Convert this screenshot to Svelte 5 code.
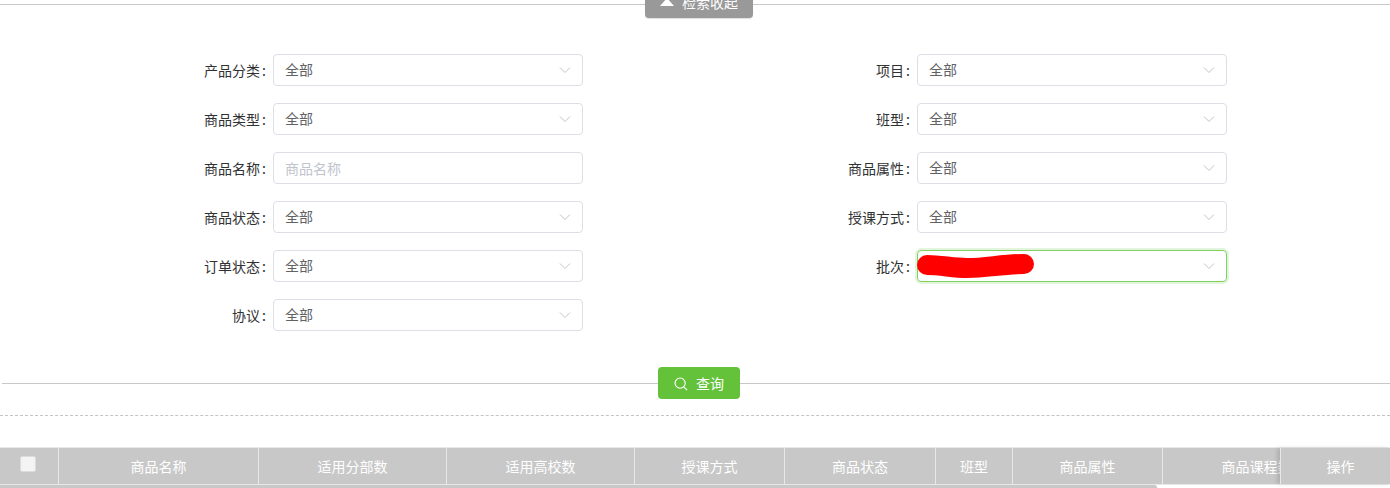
<script lang="ts">
  type Field = { label: string; value?: string; placeholder?: string; focused?: boolean };

  const rows: Field[][] = [
    [{ label: "产品分类", value: "全部" }, { label: "项目", value: "全部" }],
    [{ label: "商品类型", value: "全部" }, { label: "班型", value: "全部" }],
    [{ label: "商品名称", placeholder: "商品名称" }, { label: "商品属性", value: "全部" }],
    [{ label: "商品状态", value: "全部" }, { label: "授课方式", value: "全部" }],
    [{ label: "订单状态", value: "全部" }, { label: "批次", focused: true }],
    [{ label: "协议", value: "全部" }],
  ];

  const columns = [
    { title: "商品名称", width: 200 },
    { title: "适用分部数", width: 188 },
    { title: "适用高校数", width: 188 },
    { title: "授课方式", width: 150 },
    { title: "商品状态", width: 151 },
    { title: "班型", width: 77 },
    { title: "商品属性", width: 150 },
    { title: "商品课程数", width: 188 },
  ];
</script>

<div class="page">
  <div class="toggle-bar">
    <span class="line"></span>
    <button type="button" class="toggle">
      <span class="toggle__arrow"></span>
      检索收起
    </button>
    <span class="line"></span>
  </div>

  <form class="form">
    {#each rows as row}
      <div class="form__row">
        {#each row as field}
          <div class="field">
            <span class="field__label">{field.label}<span class="field__colon">:</span></span>
            <div class="control" class:control--focused={field.focused}>
              {#if field.placeholder}
                <span class="control__placeholder">{field.placeholder}</span>
              {:else}
                <span class="control__value">{field.value ?? ""}</span>
                <svg class="control__caret" viewBox="0 0 12 8" width="12" height="8">
                  <path d="M1 1.5 L6 6.5 L11 1.5" fill="none" stroke="#c0c4cc" stroke-width="1" />
                </svg>
              {/if}
              {#if field.focused}
                <svg class="scribble" viewBox="0 0 117 24" width="117" height="24">
                  <path
                    d="M10 11 C25 11 35 14 50 14 C70 14 85 10 107 10"
                    fill="none"
                    stroke="#ff0000"
                    stroke-width="20"
                    stroke-linecap="round"
                  />
                </svg>
              {/if}
            </div>
          </div>
        {/each}
      </div>
    {/each}
  </form>

  <div class="query-bar">
    <span class="line"></span>
    <button type="button" class="query">
      <svg class="query__icon" viewBox="0 0 16 16" width="14" height="14">
        <circle cx="7" cy="7" r="5.8" fill="none" stroke="#fff" stroke-width="1.3" />
        <path d="M11.2 11.2 L15 15" stroke="#fff" stroke-width="1.3" />
      </svg>
      查询
    </button>
    <span class="line"></span>
  </div>

  <div class="dashed"></div>

  <div class="table">
    <div class="table__head">
      <div class="table__cell table__cell--check"><span class="checkbox"></span></div>
      {#each columns as column}
        <div class="table__cell" style:width={`${column.width}px`}>{column.title}</div>
      {/each}
    </div>
    <div class="table__fixed">操作</div>
    <div class="table__scrollbar"></div>
  </div>
</div>

<style>
  :global(body) {
    margin: 0;
    background: #fff;
  }

  .page {
    width: 1390px;
    height: 488px;
    overflow: hidden;
    font-family: "Noto Sans CJK SC", "Liberation Sans", sans-serif;
    font-size: 14px;
  }

  .line {
    flex: 1;
    height: 1px;
    background: #c8c8c8;
  }

  .toggle-bar {
    display: flex;
    align-items: flex-start;
    height: 54px;
  }

  .toggle-bar .line {
    margin-top: 4px;
  }

  .toggle-bar .line:first-child {
    flex: 0 0 645px;
  }

  .toggle {
    width: 108px;
    height: 32px;
    margin-top: -14px;
    border: none;
    border-radius: 4px;
    background: #999;
    box-shadow: 0 1px 1px rgba(0, 0, 0, 0.12);
    color: #fff;
    font: inherit;
    padding: 0;
    display: flex;
    align-items: center;
    justify-content: center;
    gap: 8px;
  }

  .toggle__arrow {
    width: 0;
    height: 0;
    border-left: 7px solid transparent;
    border-right: 7px solid transparent;
    border-bottom: 8px solid #fff;
  }

  .form {
    display: flex;
    flex-direction: column;
    gap: 17px;
  }

  .form__row {
    display: grid;
    grid-template-columns: 644px 644px;
  }

  .field {
    display: flex;
    align-items: center;
    justify-content: flex-end;
    gap: 7px;
    padding-right: 61px;
  }

  .field__label {
    color: #303133;
    line-height: 32px;
  }

  .field__colon {
    margin-left: 2px;
  }

  .control {
    position: relative;
    box-sizing: border-box;
    width: 310px;
    height: 32px;
    border: 1px solid #dcdfe6;
    border-radius: 4px;
    padding: 0 11px;
    display: flex;
    align-items: center;
    justify-content: space-between;
    line-height: 28px;
  }

  .control--focused {
    border-color: #7ed060;
    box-shadow: 0 0 0 2px #e3f5dc;
  }

  .control__value {
    color: #606266;
    margin-top: -2px;
  }

  .control__placeholder {
    color: #c0c4cc;
  }

  .control__caret {
    margin-top: -1px;
  }

  .scribble {
    position: absolute;
    left: -1px;
    top: 3px;
  }

  .query-bar {
    display: flex;
    align-items: center;
    margin-top: 36px;
    padding-left: 2px;
  }

  .query {
    width: 82px;
    height: 32px;
    border: none;
    border-radius: 4px;
    background: #63c23a;
    color: #fff;
    font: inherit;
    padding: 0;
    display: flex;
    align-items: center;
    justify-content: center;
    gap: 8px;
  }

  .query__icon {
    margin-top: 1px;
  }

  .query-bar .line:first-child {
    flex: 0 0 656px;
  }

  .dashed {
    margin-top: 16px;
    border-top: 1px dashed #c4c4c4;
  }

  .table {
    position: relative;
    margin-top: 31px;
    color: #fff;
  }

  .table__head {
    display: flex;
    height: 36px;
    background: #c8c8c8;
    border-top: 1px solid #e8e8e8;
    border-bottom: 1px solid #e8e8e8;
    overflow: hidden;
  }

  .table__cell {
    flex: none;
    box-sizing: border-box;
    display: flex;
    align-items: center;
    justify-content: center;
    border-right: 1px solid #e8e8e8;
    white-space: nowrap;
  }

  .table__cell--check {
    width: 59px;
    padding-bottom: 4px;
    padding-right: 3px;
  }

  .checkbox {
    box-sizing: border-box;
    width: 16px;
    height: 16px;
    background: #f4f4f4;
    border: 1px solid #dcdcdc;
    border-radius: 2px;
  }

  .table__fixed {
    position: absolute;
    top: 1px;
    right: 0;
    box-sizing: border-box;
    width: 110px;
    height: 36px;
    padding-left: 10px;
    display: flex;
    align-items: center;
    justify-content: center;
    background: #c8c8c8;
    border-left: 1px solid #e8e8e8;
    box-shadow: -3px 0 4px rgba(0, 0, 0, 0.12);
  }

  .table__scrollbar {
    width: 1157px;
    height: 5px;
    background: #c8c8c8;
    border-radius: 0 3px 3px 0;
  }
</style>
